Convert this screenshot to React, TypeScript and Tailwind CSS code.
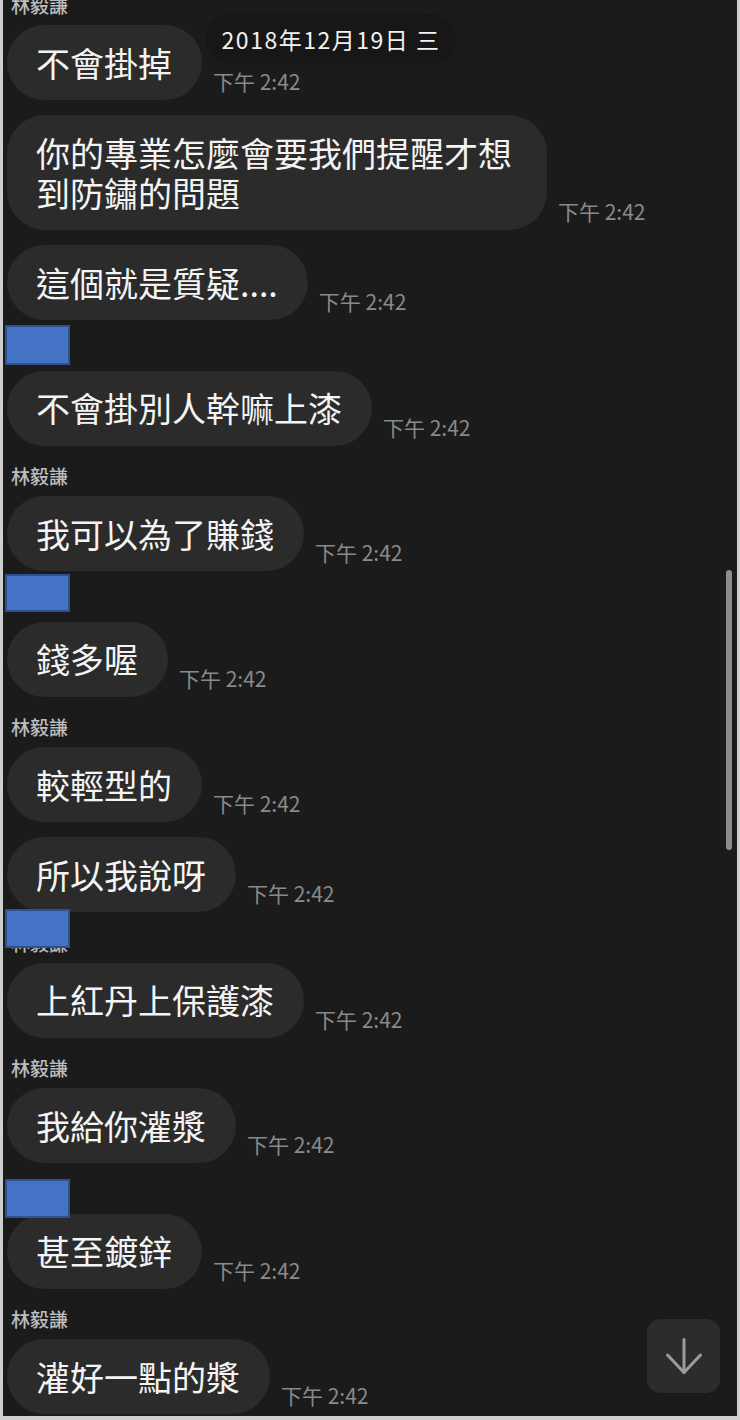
import React from 'react';

type Group = {
  name: 'text' | 'blue';
  boxTop?: number;
  boxH?: number;
  msgs: string[];
};

const groups: Group[] = [
  { name: 'text', msgs: ['不會掛掉', '你的專業怎麼會要我們提醒才想到防鏽的問題', '這個就是質疑....'] },
  { name: 'blue', boxTop: -14.5, boxH: 40, msgs: ['不會掛別人幹嘛上漆'] },
  { name: 'text', msgs: ['我可以為了賺錢'] },
  { name: 'blue', boxTop: -16.5, boxH: 38, msgs: ['錢多喔'] },
  { name: 'text', msgs: ['較輕型的', '所以我說呀'] },
  { name: 'blue', boxTop: -22.5, boxH: 39, msgs: ['上紅丹上保護漆'] },
  { name: 'text', msgs: ['我給你灌漿'] },
  { name: 'blue', boxTop: -3.5, boxH: 39, msgs: ['甚至鍍鋅'] },
  { name: 'text', msgs: ['灌好一點的漿'] },
];

function Bubble({ text, first }: { text: string; first: boolean }) {
  return (
    <div className={`flex items-end gap-[11px] ${first ? '' : 'mt-[15px]'}`}>
      <div className="max-w-[540px] rounded-[38px] bg-[#2b2b2b] pl-[29px] pr-[30px] py-[17.5px] text-[34px] leading-[40px] text-[#f4f4f4]">
        {text}
      </div>
      <span className="mb-[7px] whitespace-nowrap text-[21px] leading-[24px] text-[#8a8a8a]">下午 2:42</span>
    </div>
  );
}

export default function App() {
  return (
    <div
      className="w-[740px] h-[1420px] bg-[#cfcfcf] pl-[3px] pr-[3px] pb-[4px]"
      style={{ fontFamily: "'Noto Sans CJK TC', 'Noto Sans', sans-serif" }}
    >
      <div className="relative h-[1416px] overflow-hidden bg-[#1b1b1b]">
        {/* message list */}
        <div className="mt-[-6px] pl-[4px]">
          {groups.map((g, gi) => (
            <div key={gi}>
              <div className={`relative h-[20px] mb-[11px] ${gi === 0 ? '' : 'mt-[19.5px]'}`}>
                <span className="pl-[4px] text-[19px] leading-[20px] font-medium text-[#bdbdbd]">林毅謙</span>
                {g.name === 'blue' && (
                  <div
                    className="absolute left-[-2px] z-10 w-[65px] bg-[#4472c4] border-2 border-[#2f528f]"
                    style={{ top: g.boxTop, height: g.boxH }}
                  />
                )}
              </div>
              {g.msgs.map((m, mi) => (
                <Bubble key={mi} text={m} first={mi === 0} />
              ))}
            </div>
          ))}
        </div>

        {/* date pill */}
        <div className="absolute left-[203px] top-[14px] flex h-[50px] w-[250px] items-center justify-center rounded-full bg-[#171717] text-[23px] tracking-[1.5px] text-[#f2f2f2]">
          2018年12月19日 三
        </div>

        {/* scrollbar */}
        <div className="absolute right-[5px] top-[570px] h-[280px] w-[6px] rounded-full bg-[#8d8d8d]" />

        {/* scroll to bottom */}
        <div className="absolute right-[17px] bottom-[23px] flex h-[74px] w-[73px] items-center justify-center rounded-[14px] bg-[#2c2c2c]">
          <svg width="40" height="40" viewBox="0 0 40 40" fill="none" stroke="#9c9c9c" strokeWidth="3" strokeLinecap="round" strokeLinejoin="round">
            <path d="M20 3.5v33" />
            <path d="M3.5 19 20 36.5 36.5 19" />
          </svg>
        </div>
      </div>
    </div>
  );
}
